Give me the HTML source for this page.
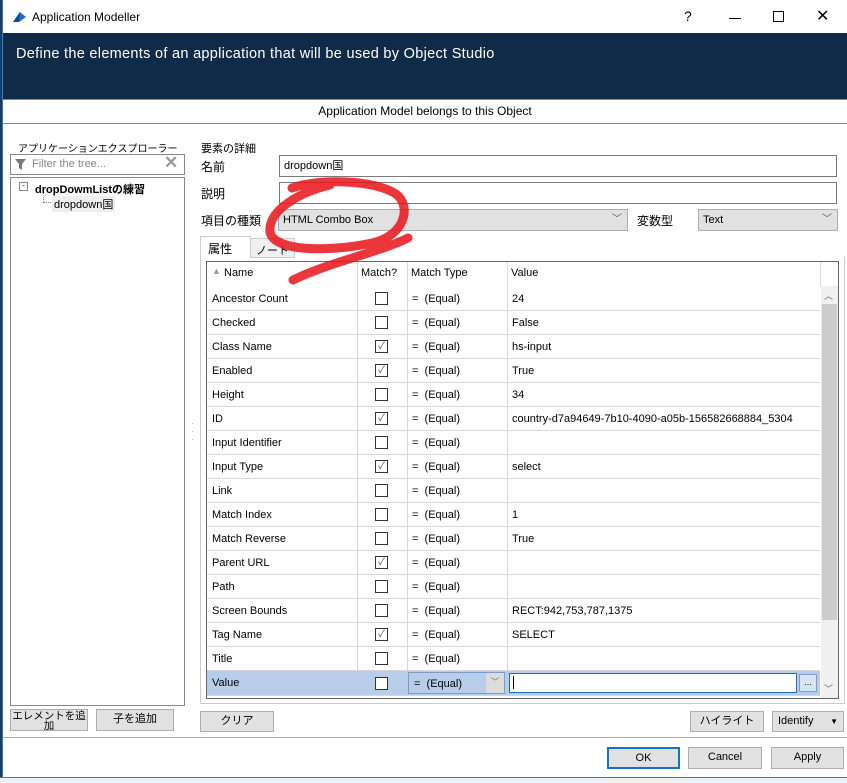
<!DOCTYPE html>
<html><head><meta charset="utf-8"><style>
*{box-sizing:border-box;margin:0;padding:0}
body{width:847px;height:783px;position:relative;overflow:hidden;background:#fff;font-family:"Liberation Sans","Noto Sans CJK JP",sans-serif;font-size:11px;color:#000}
.a{position:absolute}
.btn{position:absolute;background:#e1e1e1;border:1px solid #adadad;text-align:center;font-size:11px;line-height:19px}
.inp{position:absolute;background:#fff;border:1px solid #7a7a7a;font-size:11px;line-height:20px;padding-left:4px}
.sel{position:absolute;background:#e1e1e1;border:1px solid #adadad;font-size:11px;line-height:20px;padding-left:4px}
.chev{position:absolute;right:5px;top:0;color:#555;font-size:10px}
.row{position:absolute;left:207px;width:613px;height:24px;border-bottom:1px solid #d8d8d8}
.row span{position:absolute;top:6px;font-size:11px}
.cb{position:absolute;left:168px;top:5px;width:13px;height:13px;border:1px solid #333;background:#fff;font-size:10px;line-height:11px;text-align:center;color:#555}
</style></head><body>
<div class="a" style="left:0;top:0;width:2px;height:783px;background:#1e3a5a"></div>
<div class="a" style="left:2px;top:0;width:1px;height:778px;background:#1883d7"></div>
<div class="a" style="left:0;top:777px;width:847px;height:1px;background:#1883d7"></div>
<div class="a" style="left:0;top:778px;width:847px;height:5px;background:#eef0f2"></div>
<svg class="a" style="left:11px;top:11px" width="16" height="12"><path d="M2 11 L9 1 L15 6 L8 11 Z" fill="#1f6fc4"/><path d="M2 11 L9 1 L8 11Z" fill="#0b4a94"/></svg>
<div class="a" style="left:32px;top:10px;font-size:12px">Application Modeller</div>
<div class="a" style="left:684px;top:8px;font-size:14px">?</div>
<div class="a" style="left:729px;top:18px;width:12px;height:1px;background:#000"></div>
<div class="a" style="left:773px;top:11px;width:11px;height:11px;border:1px solid #000"></div>
<div class="a" style="left:816px;top:6px;font-size:16px">✕</div>
<div class="a" style="left:3px;top:33px;width:844px;height:66px;background:#0f2b48"></div>
<div class="a" style="left:16px;top:46px;font-size:14.5px;color:#fff;letter-spacing:0.3px">Define the elements of an application that will be used by Object Studio</div>
<div class="a" style="left:3px;top:99px;width:844px;height:25px;border-top:1px solid #888;border-bottom:1px solid #888;background:#fff"></div>
<div class="a" style="left:3px;top:104px;width:844px;text-align:center;font-size:12px">Application Model belongs to this Object</div>
<div class="a" style="left:18px;top:140px;font-size:10px">アプリケーションエクスプローラー</div>
<div class="a" style="left:10px;top:154px;width:175px;height:21px;border:1px solid #888;background:#fff"></div>
<svg class="a" style="left:15px;top:158px" width="12" height="13"><path d="M0 1 H11 L7 6 V12 L4 10 V6 Z" fill="#777"/></svg>
<div class="a" style="left:32px;top:158px;color:#888">Filter the tree...</div>
<div class="a" style="left:164px;top:153px;font-size:17px;color:#999;font-weight:bold">✕</div>
<div class="a" style="left:10px;top:177px;width:175px;height:529px;border:1px solid #888;background:#fff"></div>
<div class="a" style="left:19px;top:182px;width:9px;height:9px;border:1px solid #888;font-size:8px;line-height:6px;text-align:center">-</div>
<div class="a" style="left:35px;top:181px;font-weight:bold">dropDowmListの練習</div>
<div class="a" style="left:43px;top:193px;width:1px;height:9px;border-left:1px dotted #888"></div>
<div class="a" style="left:43px;top:202px;width:8px;border-top:1px dotted #888"></div>
<div class="a" style="left:52px;top:196px;background:#eee;padding:0 2px">dropdown国</div>
<div class="btn" style="left:10px;top:709px;width:78px;height:22px;line-height:10px;padding-top:1px;font-size:10.5px">エレメントを追<br>加</div>
<div class="btn" style="left:96px;top:709px;width:78px;height:22px">子を追加</div>
<div class="a" style="left:191px;top:420px;color:#999;font-size:8px;line-height:8px">·<br>·<br>·</div>
<div class="a" style="left:201px;top:140px">要素の詳細</div>
<div class="a" style="left:201px;top:158px;font-size:12px">名前</div>
<div class="inp" style="left:279px;top:155px;width:558px;height:22px">dropdown国</div>
<div class="a" style="left:201px;top:185px;font-size:12px">説明</div>
<div class="inp" style="left:279px;top:182px;width:558px;height:22px"></div>
<div class="a" style="left:201px;top:212px;font-size:12px">項目の種類</div>
<div class="sel" style="left:278px;top:209px;width:350px;height:22px">HTML Combo Box<span class="chev">﹀</span></div>
<div class="a" style="left:637px;top:212px;font-size:12px">変数型</div>
<div class="sel" style="left:698px;top:209px;width:140px;height:22px">Text<span class="chev">﹀</span></div>
<div class="a" style="left:250px;top:238px;width:45px;height:20px;border:1px solid #ccc;background:#f0f0f0;padding:3px 5px">ノート</div>
<div class="a" style="left:200px;top:236px;width:51px;height:22px;border:1px solid #ccc;border-bottom:none;background:#fff;padding:3px 7px;font-size:12px">属性</div>
<div class="a" style="left:200px;top:257px;width:645px;height:447px;border:1px solid #ccc;border-top:none"></div>
<div class="a" style="left:206px;top:261px;width:633px;height:438px;border:1px solid #666;background:#fff"></div>
<div class="a" style="left:212px;top:266px;color:#999;font-size:9px">▲</div>
<div class="a" style="left:224px;top:267px">Name</div>
<div class="a" style="left:361px;top:267px">Match?</div>
<div class="a" style="left:411px;top:267px">Match Type</div>
<div class="a" style="left:511px;top:267px">Value</div>
<div class="a" style="left:357px;top:262px;width:1px;height:434px;background:#d8d8d8"></div>
<div class="a" style="left:407px;top:262px;width:1px;height:434px;background:#d8d8d8"></div>
<div class="a" style="left:507px;top:262px;width:1px;height:434px;background:#d8d8d8"></div>
<div class="a" style="left:820px;top:262px;width:1px;height:24px;background:#d8d8d8"></div>
<div class="a" style="left:821px;top:286px;width:17px;height:412px;background:#f0f0f0"></div>
<div class="a" style="left:822px;top:304px;width:15px;height:316px;background:#cdcdcd"></div>
<div class="a" style="left:824px;top:289px;color:#666;font-size:9px">︿</div>
<div class="a" style="left:824px;top:682px;color:#666;font-size:9px">﹀</div>
<div class="row" style="top:287px"><span style="left:5px">Ancestor Count</span><div class="cb"></div><span style="left:205px">=&nbsp; (Equal)</span><span style="left:305px">24</span></div>
<div class="row" style="top:311px"><span style="left:5px">Checked</span><div class="cb"></div><span style="left:205px">=&nbsp; (Equal)</span><span style="left:305px">False</span></div>
<div class="row" style="top:335px"><span style="left:5px">Class Name</span><div class="cb">✓</div><span style="left:205px">=&nbsp; (Equal)</span><span style="left:305px">hs-input</span></div>
<div class="row" style="top:359px"><span style="left:5px">Enabled</span><div class="cb">✓</div><span style="left:205px">=&nbsp; (Equal)</span><span style="left:305px">True</span></div>
<div class="row" style="top:383px"><span style="left:5px">Height</span><div class="cb"></div><span style="left:205px">=&nbsp; (Equal)</span><span style="left:305px">34</span></div>
<div class="row" style="top:407px"><span style="left:5px">ID</span><div class="cb">✓</div><span style="left:205px">=&nbsp; (Equal)</span><span style="left:305px">country-d7a94649-7b10-4090-a05b-156582668884_5304</span></div>
<div class="row" style="top:431px"><span style="left:5px">Input Identifier</span><div class="cb"></div><span style="left:205px">=&nbsp; (Equal)</span></div>
<div class="row" style="top:455px"><span style="left:5px">Input Type</span><div class="cb">✓</div><span style="left:205px">=&nbsp; (Equal)</span><span style="left:305px">select</span></div>
<div class="row" style="top:479px"><span style="left:5px">Link</span><div class="cb"></div><span style="left:205px">=&nbsp; (Equal)</span></div>
<div class="row" style="top:503px"><span style="left:5px">Match Index</span><div class="cb"></div><span style="left:205px">=&nbsp; (Equal)</span><span style="left:305px">1</span></div>
<div class="row" style="top:527px"><span style="left:5px">Match Reverse</span><div class="cb"></div><span style="left:205px">=&nbsp; (Equal)</span><span style="left:305px">True</span></div>
<div class="row" style="top:551px"><span style="left:5px">Parent URL</span><div class="cb">✓</div><span style="left:205px">=&nbsp; (Equal)</span></div>
<div class="row" style="top:575px"><span style="left:5px">Path</span><div class="cb"></div><span style="left:205px">=&nbsp; (Equal)</span></div>
<div class="row" style="top:599px"><span style="left:5px">Screen Bounds</span><div class="cb"></div><span style="left:205px">=&nbsp; (Equal)</span><span style="left:305px">RECT:942,753,787,1375</span></div>
<div class="row" style="top:623px"><span style="left:5px">Tag Name</span><div class="cb">✓</div><span style="left:205px">=&nbsp; (Equal)</span><span style="left:305px">SELECT</span></div>
<div class="row" style="top:647px"><span style="left:5px">Title</span><div class="cb"></div><span style="left:205px">=&nbsp; (Equal)</span></div>
<div class="row" style="top:671px;background:#b8cdea;height:25px"><span style="left:5px">Value</span><div class="cb" style="top:6px"></div></div>
<div class="a" style="left:408px;top:672px;width:97px;height:22px;border:1px solid #7a9cc8;background:#b8cdea;padding:5px 5px">=&nbsp; (Equal)</div>
<div class="a" style="left:486px;top:673px;width:18px;height:20px;background:#dcdcdc;color:#777;font-size:9px;text-align:center;line-height:18px">﹀</div>
<div class="a" style="left:509px;top:673px;width:288px;height:20px;border:1px solid #1a6fc9;background:#fff"></div>
<div class="a" style="left:513px;top:676px;width:1px;height:13px;background:#000"></div>
<div class="a" style="left:799px;top:674px;width:18px;height:18px;border:1px solid #7a9cc8;background:#d8e4f4;font-size:9px;text-align:center;line-height:14px">...</div>
<div class="btn" style="left:200px;top:711px;width:74px;height:21px">クリア</div>
<div class="btn" style="left:690px;top:711px;width:74px;height:21px">ハイライト</div>
<div class="btn" style="left:772px;top:711px;width:72px;height:21px;text-align:left;padding-left:5px">Identify <span style="position:absolute;right:5px;font-size:8px">▼</span></div>
<div class="a" style="left:3px;top:737px;width:844px;height:1px;background:#b0b0b0"></div>
<div class="btn" style="left:607px;top:747px;width:73px;height:22px;border:2px solid #1a6fc9;line-height:18px">OK</div>
<div class="btn" style="left:688px;top:747px;width:74px;height:22px">Cancel</div>
<div class="btn" style="left:771px;top:747px;width:73px;height:22px">Apply</div>
<svg class="a" style="left:0;top:0" width="847" height="783"><path d="M330 185 C300 192 268 210 270 232 C274 252 330 252 372 243 C405 236 412 206 396 194 C375 180 320 178 292 188 M408 238 C380 252 330 262 293 280" fill="none" stroke="#e8141a" stroke-width="9" stroke-linecap="round" opacity="0.85"/></svg>
</body></html>
